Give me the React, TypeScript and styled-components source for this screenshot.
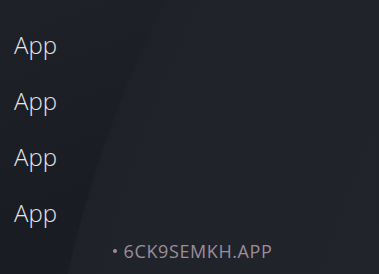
import React from "react";
import styled, { createGlobalStyle } from "styled-components";

const Global = createGlobalStyle`
  html, body { margin: 0; padding: 0; background: #1c1e25; }
  body { font-family: "Open Sans", "Liberation Sans", sans-serif; }
`;

const Screen = styled.div`
  width: 379px;
  height: 274px;
  overflow: hidden;
  box-sizing: border-box;
  display: flex;
  flex-direction: column;
  padding: 17px 0 0 14px;
  background:
    radial-gradient(circle 1266px at 1301px 559px, #25272e 0, #21232a 1230px, #1f2128 1265px, rgba(31,33,40,0) 1267px),
    linear-gradient(160deg, #1f2128 0%, #1a1c23 60%, #1c1e25 100%);
`;

const List = styled.div`
  display: flex;
  flex-direction: column;
`;

const Item = styled.div`
  height: 56px;
  line-height: 56px;
  font-size: 24px;
  font-weight: 300;
  color: #e6e6ea;
`;

const Footer = styled.div`
  display: flex;
  justify-content: center;
  align-items: center;
  gap: 7px;
  margin-left: -14px;
  padding-left: 6px;
  height: 20px;
  line-height: 20px;
  font-size: 18px;
  letter-spacing: 0.6px;
  color: #9a8e9c;
`;

const Dot = styled.span`
  width: 4px;
  height: 4px;
  border-radius: 50%;
  background: #9a8e9c;
`;

export default function App() {
  return (
    <>
      <Global />
      <Screen>
        <List>
          {["App", "App", "App", "App"].map((t, i) => (
            <Item key={i}>{t}</Item>
          ))}
        </List>
        <Footer>
          <Dot />
          <span>6CK9SEMKH.APP</span>
        </Footer>
      </Screen>
    </>
  );
}
